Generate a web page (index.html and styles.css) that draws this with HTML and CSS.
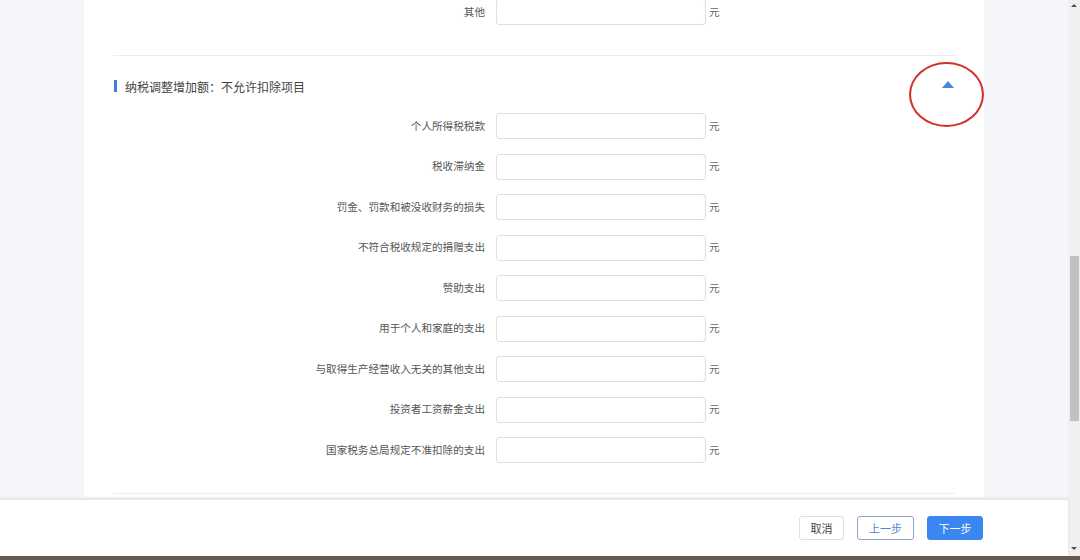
FILE: index.html
```html
<!DOCTYPE html>
<html lang="zh-CN">
<head>
<meta charset="utf-8">
<title>纳税调整</title>
<link rel="stylesheet" href="styles.css">
</head>
<body>
<div class="screen">
  <div class="window">
    <div class="content">
      <div class="viewport">
        <div class="card">
          <div class="row first">
            <label class="label">其他</label>
            <span class="input"></span>
            <span class="unit">元</span>
          </div>
          <div class="divider top-divider"></div>
          <div class="section-head">
            <div class="section-title"><span class="bar"></span>纳税调整增加额：不允许扣除项目</div>
            <span class="toggle"></span>
          </div>
          <div class="rows">
            <div class="row"><label class="label">个人所得税税款</label><span class="input"></span><span class="unit">元</span></div>
            <div class="row"><label class="label">税收滞纳金</label><span class="input"></span><span class="unit">元</span></div>
            <div class="row"><label class="label">罚金、罚款和被没收财务的损失</label><span class="input"></span><span class="unit">元</span></div>
            <div class="row"><label class="label">不符合税收规定的捐赠支出</label><span class="input"></span><span class="unit">元</span></div>
            <div class="row"><label class="label">赞助支出</label><span class="input"></span><span class="unit">元</span></div>
            <div class="row"><label class="label">用于个人和家庭的支出</label><span class="input"></span><span class="unit">元</span></div>
            <div class="row"><label class="label">与取得生产经营收入无关的其他支出</label><span class="input"></span><span class="unit">元</span></div>
            <div class="row"><label class="label">投资者工资薪金支出</label><span class="input"></span><span class="unit">元</span></div>
            <div class="row"><label class="label">国家税务总局规定不准扣除的支出</label><span class="input"></span><span class="unit">元</span></div>
          </div>
          <div class="divider bottom-divider"></div>
        </div>
      </div>
      <div class="footer">
        <button class="btn btn-cancel">取消</button>
        <button class="btn btn-prev">上一步</button>
        <button class="btn btn-next">下一步</button>
      </div>
    </div>
    <div class="scrollbar">
      <span class="arrow arrow-up"></span>
      <span class="thumb"></span>
      <span class="arrow arrow-down"></span>
    </div>
  </div>
  <div class="taskbar"></div>
  <div class="annotation"></div>
</div>
</body>
</html>
```

FILE: styles.css
```css
html, body {
  margin: 0;
  padding: 0;
}
body {
  width: 1080px;
  height: 560px;
  overflow: hidden;
  font-family: "Noto Sans CJK SC", "Microsoft YaHei", sans-serif;
  background: #f4f6f9;
}
.screen {
  position: relative;
  width: 1080px;
  height: 560px;
  display: flex;
  flex-direction: column;
}
.window {
  display: flex;
  height: 556px;
}
.content {
  width: 1068px;
  display: flex;
  flex-direction: column;
  background: #f4f6f9;
}
.viewport {
  height: 499px;
  overflow: hidden;
  padding-left: 84px;
}
.card {
  width: 842px;
  margin-top: -1px;
  padding: 0 29px 3px 29px;
  background: #fff;
}
.row {
  display: flex;
  align-items: center;
  height: 40.5px;
}
.row.first {
  height: 26px;
}
.label {
  width: 372px;
  padding-right: 11px;
  text-align: right;
  font-size: 10.6px;
  line-height: 14px;
  margin-top: -1px;
  color: #555;
  white-space: nowrap;
}
.input {
  width: 208px;
  height: 24px;
  border: 1px solid #dcdfe6;
  border-radius: 3px;
  background: #fff;
}
.unit {
  margin-left: 3px;
  font-size: 10.6px;
  line-height: 14px;
  margin-top: -1px;
  color: #666;
}
.divider {
  height: 1px;
  background: #ebedf0;
}
.top-divider {
  margin-top: 30px;
}
.section-head {
  margin-top: 21px;
  height: 18px;
  display: flex;
  align-items: center;
  justify-content: space-between;
}
.section-title {
  display: flex;
  align-items: center;
  font-size: 12px;
  color: #444;
  margin-left: 1px;
}
.bar {
  width: 3px;
  height: 12px;
  background: #3f7fd9;
  margin-right: 8px;
}
.toggle {
  width: 0;
  height: 0;
  border-left: 6px solid transparent;
  border-right: 6px solid transparent;
  border-bottom: 7px solid #4a86d8;
  margin-right: 1px;
  margin-top: -4px;
}
.rows {
  margin-top: 10.75px;
}
.bottom-divider {
  margin-top: 22.75px;
}
.footer {
  height: 57px;
  background: #fff;
  box-shadow: 0 -1px 2px rgba(0,0,0,0.08);
  border-top: 1px solid #e8e8e8;
  box-sizing: border-box;
  display: flex;
  align-items: center;
  justify-content: flex-end;
  padding-right: 85px;
  gap: 13px;
  position: relative;
}
.btn {
  height: 24px;
  padding: 0;
  border-radius: 3px;
  font-family: "Noto Sans CJK SC", sans-serif;
  font-size: 11px;
  cursor: pointer;
}
.btn-cancel {
  width: 45px;
  background: #fff;
  border: 1px solid #dcdfe6;
  color: #444;
}
.btn-prev {
  width: 57px;
  background: #fff;
  border: 1px solid #8fa4c0;
  color: #4a86d8;
}
.btn-next {
  width: 56px;
  background: #3b86f0;
  border: 1px solid #3b86f0;
  color: #fff;
}
.scrollbar {
  width: 12px;
  background: #f0f0f0;
  display: flex;
  flex-direction: column;
  align-items: center;
}
.arrow {
  width: 0;
  height: 0;
  border-left: 3px solid transparent;
  border-right: 3px solid transparent;
}
.arrow-up {
  margin-top: 4px;
  border-bottom: 3px solid #505050;
}
.thumb {
  width: 9px;
  height: 165px;
  margin-top: 249px;
  background: #c1c1c1;
}
.arrow-down {
  margin-top: auto;
  margin-bottom: 6px;
  border-top: 3px solid #505050;
}
.taskbar {
  height: 4px;
  background: #635a53;
}
.annotation {
  position: absolute;
  left: 909px;
  top: 62px;
  width: 71px;
  height: 61px;
  border: 2px solid #d2302b;
  border-radius: 50%;
}
```
